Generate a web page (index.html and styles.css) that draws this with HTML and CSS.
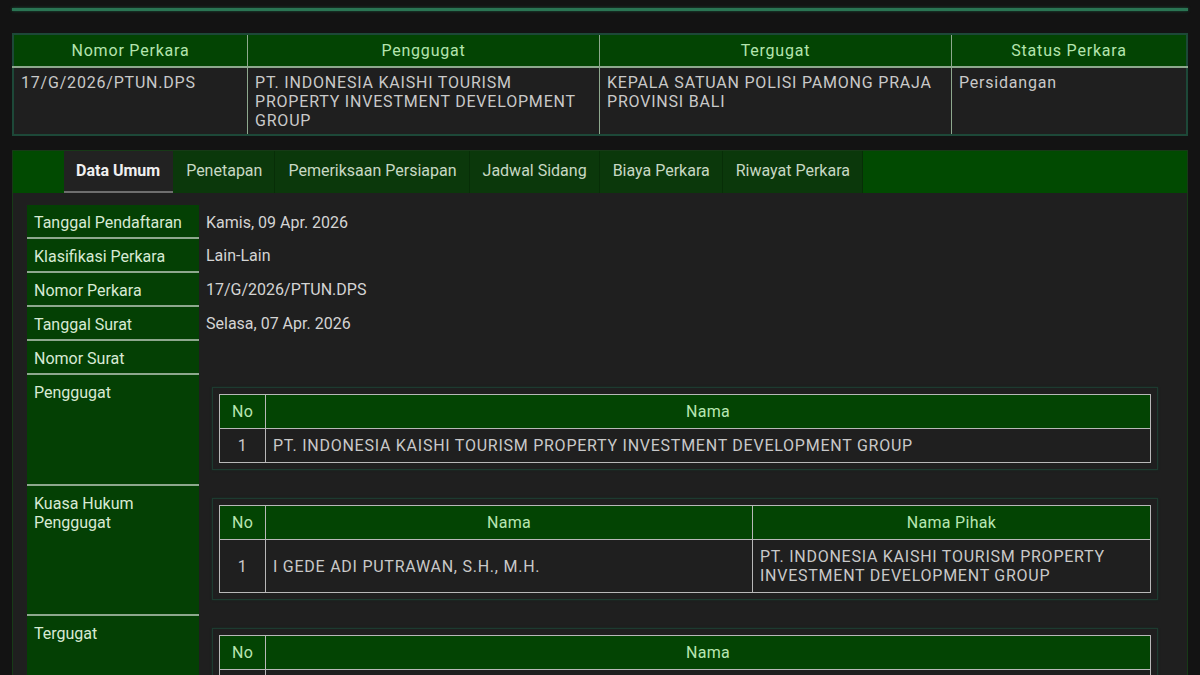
FILE: index.html
```html
<!DOCTYPE html>
<html lang="id">
<head>
	<meta charset="UTF-8">
	<meta name="viewport" content="width=device-width, initial-scale=1.0">
	<title>Detil Perkara 17/G/2026/PTUN.DPS</title>
	<link rel="stylesheet" href="styles.css">
</head>
<body>

	<div class="topline"></div>

	<table class="case">
		<thead>
			<tr>
				<th class="c1">Nomor Perkara</th>
				<th class="c2">Penggugat</th>
				<th class="c3">Tergugat</th>
				<th class="c4">Status Perkara</th>
			</tr>
		</thead>
		<tbody>
			<tr>
				<td>17/G/2026/PTUN.DPS</td>
				<td>PT. INDONESIA KAISHI TOURISM PROPERTY INVESTMENT DEVELOPMENT GROUP</td>
				<td>KEPALA SATUAN POLISI PAMONG PRAJA PROVINSI BALI</td>
				<td>Persidangan</td>
			</tr>
		</tbody>
	</table>

	<div class="panel">
		<ul class="tabs">
			<li class="active">Data Umum</li>
			<li>Penetapan</li>
			<li>Pemeriksaan Persiapan</li>
			<li>Jadwal Sidang</li>
			<li>Biaya Perkara</li>
			<li>Riwayat Perkara</li>
		</ul>

		<table class="info">
			<tr><th>Tanggal Pendaftaran</th><td>Kamis, 09 Apr. 2026</td></tr>
			<tr><th>Klasifikasi Perkara</th><td>Lain-Lain</td></tr>
			<tr><th>Nomor Perkara</th><td>17/G/2026/PTUN.DPS</td></tr>
			<tr><th>Tanggal Surat</th><td>Selasa, 07 Apr. 2026</td></tr>
			<tr><th>Nomor Surat</th><td></td></tr>
			<tr>
				<th>Penggugat</th>
				<td class="nested">
					<div class="box">
						<table class="list">
							<tr><th class="no">No</th><th>Nama</th></tr>
							<tr><td class="no">1</td><td>PT. INDONESIA KAISHI TOURISM PROPERTY INVESTMENT DEVELOPMENT GROUP</td></tr>
						</table>
					</div>
				</td>
			</tr>
			<tr>
				<th>Kuasa Hukum Penggugat</th>
				<td class="nested">
					<div class="box">
						<table class="list">
							<tr><th class="no">No</th><th class="nama">Nama</th><th>Nama Pihak</th></tr>
							<tr><td class="no">1</td><td>I GEDE ADI PUTRAWAN, S.H., M.H.</td><td>PT. INDONESIA KAISHI TOURISM PROPERTY INVESTMENT DEVELOPMENT GROUP</td></tr>
						</table>
					</div>
				</td>
			</tr>
			<tr>
				<th>Tergugat</th>
				<td class="nested">
					<div class="box">
						<table class="list">
							<tr><th class="no">No</th><th>Nama</th></tr>
							<tr><td class="no">1</td><td>KEPALA SATUAN POLISI PAMONG PRAJA PROVINSI BALI</td></tr>
						</table>
					</div>
				</td>
			</tr>
		</table>
	</div>

</body>
</html>
```

FILE: styles.css
```css
body {
	margin: 0;
	padding: 0 12px;
	background: #131313;
	font-family: Roboto, "Liberation Sans", sans-serif;
	font-size: 16px;
	color: #c9c9c9;
}

.topline {
	margin-top: 8px;
	height: 3px;
	background: #2a7453;
	box-shadow: 0 0 3px #1d5a3f;
}

/* case summary */
.case {
	margin-top: 22px;
	width: 100%;
	border-collapse: collapse;
	border: 2px solid #1d4838;
	letter-spacing: 0.8px;
	table-layout: fixed;
}

.case th {
	height: 31px;
	padding: 0;
	background: #034403;
	color: #b4e4ae;
	font-weight: 400;
	border-left: 1px solid #8ea88e;
	border-bottom: 2px solid #8ea88e;
}

.case td {
	height: 61px;
	vertical-align: top;
	padding: 5px 7px 0;
	line-height: 19px;
	background: #1f1f1f;
	border-left: 1px solid #8ea88e;
}

.case th:first-child,
.case td:first-child {
	border-left: none;
}

.case .c1 { width: 233px; }
.case .c2 { width: 351px; }
.case .c3 { width: 351px; }

/* detail panel */
.panel {
	margin-top: 14px;
	background: #1f1f1f;
	border: 1px solid #173a17;
	border-bottom: none;
	padding-bottom: 20px;
}

.tabs {
	list-style: none;
	margin: 0;
	padding: 0 0 0 51px;
	display: flex;
	height: 42px;
	background: #014a01;
}

.tabs li {
	padding: 0 12px 0 13px;
	line-height: 40px;
	background: #0b380b;
	color: #c8d8c4;
	border-right: 1px solid #072e07;
}

.tabs li.active {
	padding: 0 13px 0 12px;
	background: #222;
	color: #f0f0f0;
	font-weight: 700;
	border-bottom: 2px solid #6e6e6e;
	border-right: none;
}

.info {
	margin: 12px 18px 0 14px;
	width: calc(100% - 32px);
	border-collapse: collapse;
}

.info > tbody > tr > th {
	width: 158px;
	background: #044004;
	color: #d8ead4;
	font-weight: 400;
	text-align: left;
	vertical-align: top;
	padding: 8px 7px 0;
	line-height: 19px;
	height: 24px;
	border-bottom: 2px solid #8ea88e;
}

.info > tbody > tr > td {
	vertical-align: top;
	padding: 8px 7px 0;
	line-height: 19px;
	color: #d4d4d4;
}

.info > tbody > tr > td.nested {
	padding: 13px 11px 15px 13px;
}

.box {
	border: 1px solid #1d3b30;
	padding: 6px;
	box-shadow: 0 0 2px #163026;
}

.list {
	width: 100%;
	border-collapse: collapse;
	border: 1px solid #b8b8b8;
	letter-spacing: 0.75px;
	table-layout: fixed;
}

.list th {
	height: 33px;
	padding: 0;
	background: #034403;
	color: #b8e6b2;
	font-weight: 400;
	letter-spacing: 0.3px;
	border: 1px solid #b8b8b8;
}

.list td {
	padding: 7px;
	line-height: 19px;
	background: #1f1f1f;
	color: #c9c9c9;
	border: 1px solid #b8b8b8;
}

.list .no {
	width: 45px;
	padding: 0;
	text-align: center;
}

.list .nama {
	width: 486px;
}
```
